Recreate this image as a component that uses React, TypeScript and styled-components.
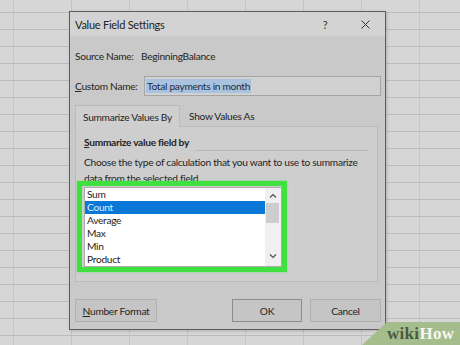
import React from "react";
import styled, { createGlobalStyle } from "styled-components";

const GlobalStyle = createGlobalStyle`
  html, body { margin: 0; padding: 0; }
  body { background: #d6d6d6; font-family: Lato, "Noto Sans", sans-serif; }
  * { box-sizing: border-box; }
`;

const Sheet = styled.div`
  position: relative;
  width: 460px;
  height: 345px;
  overflow: hidden;
  padding: 11px 0 0 69px;
  background-color: #d6d6d6;
  background-image:
    linear-gradient(to bottom, #bcbcbc 1px, transparent 1px),
    linear-gradient(to right, #c5c5c5 1px, transparent 1px);
  background-size: 100% 17px, 58px 100%;
  background-position: 0 12px, 13px 0;
`;

const Dialog = styled.div`
  width: 317px;
  height: 319px;
  border: 1px solid #5c5c5c;
  background: #c9c9c9;
  display: flex;
  flex-direction: column;
  box-shadow: 1px 1px 3px rgba(0, 0, 0, 0.18);
  color: #242424;
  font-size: 10.2px;
  letter-spacing: -0.3px;
`;

const TitleBar = styled.div`
  display: flex;
  align-items: center;
  height: 24px;
  flex: none;
  background: #d3d3d3;
  padding-left: 5px;
`;

const Title = styled.span`
  flex: 1;
  font-size: 11px;
  letter-spacing: -0.25px;
  color: #222;
`;

const TitleButton = styled.div`
  width: 40px;
  height: 24px;
  display: flex;
  align-items: center;
  justify-content: center;
  font-size: 11px;
  color: #333;
`;

const Content = styled.div`
  display: flex;
  flex-direction: column;
  padding: 0 4px 0 5px;
  flex: 1;
`;

const FieldRow = styled.div`
  display: flex;
  align-items: center;
  height: 20px;
  margin-top: 10px;
  white-space: nowrap;
`;

const FieldLabel = styled.span<{ $width: number }>`
  width: ${(p) => p.$width}px;
  flex: none;
`;

const AccessKey = styled.span`
  text-decoration: underline;
  text-underline-offset: 1px;
`;

const TextInput = styled.div`
  flex: 1;
  height: 20px;
  border: 1px solid #a5a5a5;
  background: #d1d1d1;
  padding-left: 1px;
  display: flex;
  align-items: center;
`;

const Selection = styled.span`
  background: #a9c2dd;
  color: #1d2c46;
  padding: 0 1px;
  line-height: 14px;
`;

const TabStrip = styled.div`
  display: flex;
  height: 21px;
  margin-top: 9px;
  position: relative;
  z-index: 1;
`;

const Tab = styled.div<{ $active?: boolean }>`
  display: flex;
  align-items: center;
  justify-content: center;
  height: ${(p) => (p.$active ? 22 : 21)}px;
  width: ${(p) => (p.$active ? "105px" : "auto")};
  padding: 0 ${(p) => (p.$active ? 0 : 8)}px;
  background: ${(p) => (p.$active ? "#cfcfcf" : "transparent")};
  border: 1px solid ${(p) => (p.$active ? "#bbbbbb" : "transparent")};
  border-bottom: none;
  white-space: nowrap;
`;

const Panel = styled.div`
  width: 303px;
  height: 156px;
  background: #cecece;
  border: 1px solid #bbbbbb;
  padding: 7px 8px 0 8px;
  display: flex;
  flex-direction: column;
`;

const GroupHeader = styled.div`
  display: flex;
  height: 17px;
  align-items: flex-start;
`;

const GroupTitle = styled.span`
  font-weight: 700;
  line-height: 16px;
  white-space: nowrap;
`;

const Rule = styled.div`
  flex: 1;
  height: 1px;
  align-self: flex-end;
  background: #b9b9b9;
  margin: 0 0 0 6px;
`;

const Description = styled.p`
  margin: 3px 0 0 0;
  line-height: 16px;
  white-space: nowrap;
`;

const Highlight = styled.div`
  margin: -5px 0 0 -7px;
  width: 210px;
  height: 91px;
  border: 5px solid #40e040;
  padding: 1px 0 0 2px;
  box-shadow: 0 0 2px rgba(80, 230, 80, 0.7);
`;

const ListBox = styled.div`
  width: 198px;
  height: 80px;
  border: 1px solid #acacac;
  background: #ffffff;
  display: flex;
`;

const Options = styled.div`
  flex: 1;
  display: flex;
  flex-direction: column;
`;

const Option = styled.div<{ $selected?: boolean }>`
  height: 13px;
  line-height: 13px;
  padding-left: 2px;
  background: ${(p) => (p.$selected ? "#0b77d6" : "transparent")};
  color: ${(p) => (p.$selected ? "#dcecff" : "#1e1e1e")};
`;

const ScrollBar = styled.div`
  width: 16px;
  background: #f0f0f0;
  display: flex;
  flex-direction: column;
`;

const ScrollArrow = styled.div<{ $bottom?: boolean }>`
  height: 14px;
  display: flex;
  align-items: center;
  justify-content: center;
  margin-top: ${(p) => (p.$bottom ? "auto" : "0")};
  margin-bottom: ${(p) => (p.$bottom ? "3px" : "0")};
`;

const Thumb = styled.div`
  height: 20px;
  margin: 1px 2px 0 1px;
  background: #cdcdcd;
`;

const Footer = styled.div`
  display: flex;
  margin-top: 17px;
`;

const Button = styled.div<{ $width: number; $default?: boolean; $push?: boolean; $gap?: number }>`
  width: ${(p) => p.$width}px;
  height: 23px;
  margin-left: ${(p) => (p.$push ? "auto" : `${p.$gap ?? 0}px`)};
  background: #c5c5c5;
  border: 1px solid ${(p) => (p.$default ? "#8c8c8c" : "#b0b0b0")};
  display: flex;
  align-items: center;
  justify-content: center;
  white-space: nowrap;
`;

const Watermark = styled.div`
  position: absolute;
  right: 0;
  bottom: 0;
  width: 98px;
  height: 23px;
  padding-left: 25px;
  background: #a5bd8c;
  clip-path: polygon(0 100%, 25px 0, 100% 0, 100% 100%);
  font-family: "Liberation Serif", "DejaVu Serif", serif;
  font-weight: 700;
  font-size: 17px;
  line-height: 23px;
  letter-spacing: 0.3px;
`;

const WikiPart = styled.span`
  color: #4b5a44;
`;

const HowPart = styled.span`
  color: #f5f8f1;
`;

const Chevron = ({ up }: { up?: boolean }) => (
  <svg width="8" height="5" viewBox="0 0 8 5">
    <polyline
      points={up ? "1,4.5 4,1.5 7,4.5" : "1,0.5 4,3.5 7,0.5"}
      fill="none"
      stroke="#505050"
      strokeWidth="1.2"
    />
  </svg>
);

const CloseIcon = () => (
  <svg width="9" height="9" viewBox="0 0 9 9">
    <path d="M0.5 0.5 L8.5 8.5 M8.5 0.5 L0.5 8.5" stroke="#333" strokeWidth="1" />
  </svg>
);

const options = ["Sum", "Count", "Average", "Max", "Min", "Product"];

export default function App() {
  return (
    <>
      <GlobalStyle />
      <Sheet>
        <Dialog>
          <TitleBar>
            <Title>Value Field Settings</Title>
            <TitleButton>?</TitleButton>
            <TitleButton>
              <CloseIcon />
            </TitleButton>
          </TitleBar>
          <Content>
            <FieldRow>
              <FieldLabel $width={66}>Source Name:</FieldLabel>
              <span>BeginningBalance</span>
            </FieldRow>
            <FieldRow>
              <FieldLabel $width={69}>
                <AccessKey>C</AccessKey>ustom Name:
              </FieldLabel>
              <TextInput>
                <Selection>Total payments in month</Selection>
              </TextInput>
            </FieldRow>
            <TabStrip>
              <Tab $active>Summarize Values By</Tab>
              <Tab>Show Values As</Tab>
            </TabStrip>
            <Panel>
              <GroupHeader>
                <GroupTitle>
                  <AccessKey>S</AccessKey>ummarize value field by
                </GroupTitle>
                <Rule />
              </GroupHeader>
              <Description>
                Choose the type of calculation that you want to use to summarize
                <br />
                data from the selected field
              </Description>
              <Highlight>
                <ListBox>
                  <Options>
                    {options.map((o) => (
                      <Option key={o} $selected={o === "Count"}>
                        {o}
                      </Option>
                    ))}
                  </Options>
                  <ScrollBar>
                    <ScrollArrow>
                      <Chevron up />
                    </ScrollArrow>
                    <Thumb />
                    <ScrollArrow $bottom>
                      <Chevron />
                    </ScrollArrow>
                  </ScrollBar>
                </ListBox>
              </Highlight>
            </Panel>
            <Footer>
              <Button $width={82}>
                <AccessKey>N</AccessKey>umber Format
              </Button>
              <Button $width={70} $push $default>
                OK
              </Button>
              <Button $width={71} $gap={8}>
                Cancel
              </Button>
            </Footer>
          </Content>
        </Dialog>
        <Watermark>
          <WikiPart>wiki</WikiPart>
          <HowPart>How</HowPart>
        </Watermark>
      </Sheet>
    </>
  );
}
